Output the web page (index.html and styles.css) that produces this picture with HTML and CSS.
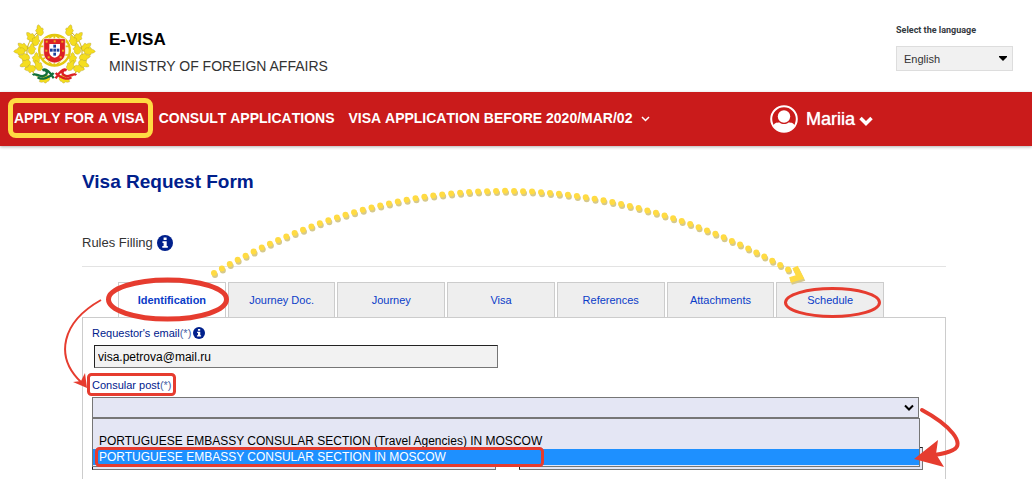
FILE: index.html
```html
<!DOCTYPE html>
<html lang="en">
<head>
    <meta charset="UTF-8">
    <meta name="viewport" content="width=device-width, initial-scale=1.0">
    <title>E-VISA</title>
    <link rel="stylesheet" href="styles.css">
</head>
<body>
    <header class="header">
        <svg class="crest" viewBox="24 24 249 186" aria-hidden="true">
            <defs>
                <path id="leaf" d="M0 0 C-8 -2 -12 -8 -9 -13 C-14 -17 -12 -22 -6 -22 C-6 -28 -3 -32 0 -34 C3 -32 6 -28 6 -22 C12 -22 14 -17 9 -13 C12 -8 8 -2 0 0Z"/>
                <g id="branch">
                    <path d="M122 200 C85 185 62 150 66 105 C68 85 82 62 104 48" fill="none" stroke="#c9ae14" stroke-width="3"/>
                    <g fill="#f5de1e" stroke="#a89226" stroke-width="1">
                        <use href="#leaf" transform="translate(108 62) rotate(-15)"/>
                        <use href="#leaf" transform="translate(88 78) rotate(-42)"/>
                        <use href="#leaf" transform="translate(88 92) rotate(18)"/>
                        <use href="#leaf" transform="translate(66 106) rotate(-52)"/>
                        <use href="#leaf" transform="translate(60 108) rotate(-92)"/>
                        <use href="#leaf" transform="translate(78 118) rotate(8)"/>
                        <use href="#leaf" transform="translate(74 130) rotate(-78)"/>
                        <use href="#leaf" transform="translate(76 140) rotate(-114)"/>
                        <use href="#leaf" transform="translate(94 146) rotate(0)"/>
                        <use href="#leaf" transform="translate(92 160) rotate(-94)"/>
                        <use href="#leaf" transform="translate(108 166) rotate(-30)"/>
                        <use href="#leaf" transform="translate(134 186) rotate(-114)"/>
                    </g>
                </g>
            </defs>
            <use href="#branch"/>
            <use href="#branch" transform="translate(297 0) scale(-1 1)"/>
            <circle cx="148.500" cy="106" r="46" fill="#fffbe0" stroke="#e3c80f" stroke-width="7"/>
            <g fill="none" stroke="#e3c80f" stroke-width="5">
                <ellipse cx="148" cy="106" rx="24" ry="45"/>
                <path d="M104 94 H193 M104 120 H193 M112 134 L185 78 M148 60 V152"/>
            </g>
            <path d="M116 71 H181 V114 C181 132 166 142 149 144 C132 142 116 132 116 114Z" fill="#dc2024" stroke="#fff" stroke-width="2"/>
            <path d="M133 87 H165 V112 C165 121 158 126 149 128 C140 126 133 121 133 112Z" fill="#fff"/>
            <g fill="#1d3f9c">
                <rect x="145" y="89" width="8" height="9"/>
                <rect x="135" y="101" width="8" height="9"/>
                <rect x="145" y="101" width="8" height="9"/>
                <rect x="155" y="101" width="8" height="9"/>
                <rect x="145" y="113" width="8" height="9"/>
            </g>
            <g fill="#f0a81c">
                <rect x="122" y="77" width="6" height="6"/>
                <rect x="146" y="76" width="6" height="6"/>
                <rect x="169" y="77" width="6" height="6"/>
                <rect x="121" y="104" width="6" height="6"/>
                <rect x="171" y="104" width="6" height="6"/>
                <rect x="128" y="124" width="6" height="6"/>
                <rect x="164" y="124" width="6" height="6"/>
            </g>
            <path d="M83 180 C92 172 104 188 118 182 C132 176 124 163 113 166 C122 158 137 172 146 190 M98 187 C110 196 134 188 146 174" fill="none" stroke="#12703b" stroke-width="7"/>
            <path d="M214 180 C205 172 193 188 180 182 C166 176 174 163 184 166 C176 158 162 172 152 190 M199 187 C188 196 164 188 152 174" fill="none" stroke="#dc2024" stroke-width="7"/>
        </svg>
        <div class="brand">
            <div class="brand-name">E-VISA</div>
            <div class="brand-sub">MINISTRY OF FOREIGN AFFAIRS</div>
        </div>
        <div class="language">
            <label for="language">Select the language</label>
            <div class="select-wrap">
                <select id="language" class="language-select">
                    <option>English</option>
                </select>
                <svg class="caret" viewBox="0 0 10 6" aria-hidden="true"><path d="M1 0 H9 V1 L5 5 L1 1Z"/></svg>
            </div>
        </div>
    </header>

    <nav class="nav">
        <a class="active" href="#">APPLY FOR A VISA</a>
        <a href="#">CONSULT APPLICATIONS</a>
        <a href="#">VISA APPLICATION BEFORE 2020/MAR/02
            <svg class="nav-chevron" viewBox="0 0 9 6" aria-hidden="true"><path d="M1 1 L4.500 4.500 L8 1" fill="none" stroke="#fff" stroke-width="1.500"/></svg>
        </a>
        <a class="user" href="#">
            <svg class="avatar" viewBox="0 0 28 28" aria-hidden="true">
                <defs><clipPath id="face"><circle cx="14" cy="14" r="12.500"/></clipPath></defs>
                <circle cx="14" cy="14" r="12.800" fill="none" stroke="#fff" stroke-width="2"/>
                <g clip-path="url(#face)">
                    <path d="M3 28 V22 C4 18 6 17.500 9.500 17.500 C12 19.500 16 19.500 18.500 17.500 C22 17.500 24 18 25 22 V28Z" fill="#fff"/>
                </g>
                <circle cx="14" cy="11.500" r="6.200" fill="#fff"/>
            </svg>
            <span>Mariia</span>
            <svg class="user-chevron" viewBox="0 0 14 10" aria-hidden="true"><path d="M1.500 2 L7 7.500 L12.500 2" fill="none" stroke="#fff" stroke-width="3.500"/></svg>
        </a>
    </nav>

    <main class="container">
        <h1>Visa Request Form</h1>
        <div class="rules">
            <span>Rules Filling</span>
            <svg class="info" viewBox="0 0 16 16" aria-hidden="true"><circle cx="8" cy="8" r="8" fill="#00208c"/><path d="M6.600 2.500 H9.600 V5 H6.600Z M5.500 6.200 H9.700 V11 H10.800 V12.800 H5.300 V11 H6.600 V8 H5.500Z" fill="#fff"/></svg>
        </div>

        <div class="tabs">
            <a class="tab selected" href="#">Identification</a>
            <a class="tab" href="#">Journey Doc.</a>
            <a class="tab" href="#">Journey</a>
            <a class="tab" href="#">Visa</a>
            <a class="tab" href="#">References</a>
            <a class="tab" href="#">Attachments</a>
            <a class="tab" href="#">Schedule</a>
        </div>

        <form class="panel">
            <div class="label-row">
                <label for="email">Requestor's email<span class="req">(*)</span></label>
                <svg class="info small" viewBox="0 0 16 16" aria-hidden="true"><circle cx="8" cy="8" r="8" fill="#00208c"/><path d="M6.600 2.500 H9.600 V5 H6.600Z M5.500 6.200 H9.700 V11 H10.800 V12.800 H5.300 V11 H6.600 V8 H5.500Z" fill="#fff"/></svg>
            </div>
            <input class="field email" id="email" type="text" value="visa.petrova@mail.ru">

            <div class="label-row">
                <label for="post">Consular post<span class="req">(*)</span></label>
            </div>
            <div class="post">
                <select id="post" class="post-select">
                    <option></option>
                </select>
                <svg class="post-chevron" viewBox="0 0 10 7" aria-hidden="true"><path d="M1 1.500 L5 5.500 L9 1.500" fill="none" stroke="#000" stroke-width="2"/></svg>
                <!-- Open list of posts -->
                <ul class="post-list" role="listbox">
                    <li role="option" class="blank"></li>
                    <li role="option">PORTUGUESE EMBASSY CONSULAR SECTION (Travel Agencies) IN MOSCOW</li>
                    <li role="option" class="highlighted" aria-selected="true">PORTUGUESE EMBASSY CONSULAR SECTION IN MOSCOW</li>
                </ul>
            </div>

            <div class="field-row">
                <input class="field name" type="text" aria-label="Surname">
                <input class="field name" type="text" aria-label="Name">
            </div>
        </form>
    </main>

    <!-- Guide marks drawn over the form -->
    <svg class="marks" width="1032" height="479" viewBox="0 0 1032 479" aria-hidden="true">
        <g fill="none" stroke="#e63c2f">
            <ellipse cx="167.500" cy="299.500" rx="59" ry="19.500" stroke-width="5"/>
            <ellipse cx="832.500" cy="302.500" rx="47" ry="14" stroke-width="3"/>
            <path d="M101 300 C62 322 54 356 81 382" stroke-width="2"/>
            <path d="M922 410 C950 425 966 444 953 450 C948 453 941 454 934 455" stroke-width="4" stroke-linecap="round"/>
            <rect x="88.500" y="374.500" width="86" height="20" rx="3" stroke-width="3"/>
            <rect x="96.500" y="448.500" width="446" height="17" rx="3" stroke-width="3"/>
        </g>
        <path d="M87 388 L85 373 L81 381 L73 382Z" fill="#e63c2f"/>
        <path d="M914 459 L938 440 L936 454 L944 467Z" fill="#e63c2f"/>
        <g fill="none" stroke-width="6">
            <g stroke="#d6c98c" transform="translate(1 2)">
                <path d="M214 273 C400 164 604 164 789 270" stroke-dasharray="0 9" stroke-linecap="round"/>
                <path d="M795 267 L800 277 L790 280"/>
            </g>
            <g stroke="#ffdb43">
                <path d="M214 273 C400 164 604 164 789 270" stroke-dasharray="0 9" stroke-linecap="round"/>
                <path d="M795 267 L800 277 L790 280"/>
            </g>
        </g>
    </svg>
</body>
</html>
```

FILE: styles.css
```css
* {
    box-sizing: border-box;
}
body {
    font-family: "Liberation Sans", Arial, sans-serif;
    margin: 0;
    min-height: 100vh;
    display: flex;
    flex-direction: column;
    position: relative;
    background-color: #fff;
    color: #333;
}
a {
    text-decoration: none;
}
.header {
    display: flex;
    align-items: flex-start;
    height: 92px;
    padding: 23px 19px 0 13px;
}
.crest {
    width: 83px;
    height: 62px;
}
.brand {
    margin-left: 13px;
    padding-top: 7px;
}
.brand-name {
    font-size: 17px;
    line-height: 20px;
    font-weight: bold;
    color: #000;
}
.brand-sub {
    margin-top: 6px;
    font-size: 14px;
    line-height: 20px;
}
.language {
    margin-left: auto;
    width: 117px;
}
.language label {
    display: block;
    font-family: Roboto, sans-serif;
    font-size: 9px;
    font-weight: bold;
    line-height: 14px;
    color: #333940;
}
.select-wrap {
    position: relative;
    margin-top: 9px;
}
.language-select {
    appearance: none;
    display: block;
    width: 100%;
    height: 25px;
    padding: 1px 7px 0;
    border: 1px solid #ddd;
    border-radius: 0;
    background-color: #f1f1f1;
    font-family: inherit;
    font-size: 11px;
    color: #333;
}
.caret {
    position: absolute;
    right: 5px;
    top: 10px;
    width: 10px;
    height: 6px;
}
.nav {
    display: flex;
    align-items: center;
    gap: 14px;
    height: 54px;
    padding: 0 159px 2px 14px;
    background-color: #ca1b1b;
    box-shadow: 0 1px 3px rgba(0, 0, 0, 0.3);
}
.nav a {
    color: #fff;
    font-size: 14px;
    font-weight: bold;
    font-kerning: none;
    white-space: nowrap;
    position: relative;
}
.nav .active::after {
    content: "";
    position: absolute;
    inset: -12px -8px -12px -6px;
    border: 5px solid #ffdb43;
    border-radius: 8px;
}
.nav-chevron {
    width: 9px;
    height: 6px;
    margin-left: 5px;
    vertical-align: 1px;
}
.nav .user {
    display: flex;
    align-items: center;
    margin-left: auto;
    padding-top: 2px;
    font-size: 18px;
    font-weight: normal;
    text-shadow: 0 0 1px #fff;
}
.avatar {
    width: 28px;
    height: 28px;
    margin-right: 8px;
}
.user-chevron {
    width: 14px;
    height: 10px;
    margin: 4px 0 0 4px;
}
.container {
    flex: 1;
    display: flex;
    flex-direction: column;
    padding: 24px 86px 0 82px;
}
h1 {
    margin: 0;
    font-size: 19px;
    line-height: 24px;
    color: #00208c;
}
.rules {
    display: flex;
    align-items: center;
    gap: 4px;
    margin-top: 39px;
    padding-bottom: 13px;
    border-bottom: 1px solid #e3e3e3;
    font-size: 13px;
    line-height: 20px;
}
.info {
    width: 16px;
    height: 16px;
}
.info.small {
    width: 12px;
    height: 12px;
}
.tabs {
    display: flex;
    gap: 2px;
    margin-top: 15px;
    padding: 0 62px 0 36px;
}
.tab {
    flex: 1;
    height: 35px;
    border: 1px solid #ccc;
    border-bottom: 0;
    background-color: #eee;
    color: #0a3cc8;
    font-size: 11px;
    line-height: 35px;
    text-align: center;
}
.tab.selected {
    background-color: #fff;
    font-weight: bold;
}
.panel {
    flex: 1;
    padding: 8px 22px 0 9px;
    border: 1px solid #ccc;
    border-bottom: 0;
}
.label-row {
    display: flex;
    align-items: center;
    gap: 2px;
    font-size: 11px;
    line-height: 14px;
    color: #00208c;
}
.req {
    color: #4a5fa5;
}
.field {
    display: block;
    width: 404px;
    height: 23px;
    padding: 0 3px;
    border: 1px solid #767676;
    border-top-color: #222;
    border-left-color: #222;
    border-radius: 0;
    background-color: #f2f2f2;
    font-family: inherit;
    font-size: 12px;
    color: #000;
}
.field.email {
    margin: 5px 0 10px 2px;
}
.post {
    position: relative;
    margin: 5px 4px 0 0;
}
.post-select {
    appearance: none;
    display: block;
    width: 100%;
    height: 21px;
    border: 1px solid #767676;
    border-radius: 0;
    background-color: #e4e6f4;
}
.post-chevron {
    position: absolute;
    right: 5px;
    top: 7px;
    width: 10px;
    height: 7px;
}
.post-list {
    position: absolute;
    top: 21px;
    left: 0;
    right: -1px;
    margin: 0;
    padding: 0 0 1px;
    border: 1px solid #767676;
    background-color: #e4e6f4;
    list-style: none;
    font-size: 12px;
    line-height: 16px;
    color: #000;
}
.post-list li {
    height: 16px;
    padding-left: 6px;
}
.post-list .blank {
    height: 14px;
}
.post-list .highlighted {
    background-color: #1e90ff;
    color: #fff;
}
.field-row {
    display: flex;
    justify-content: space-between;
    margin-top: 29px;
}
.field.name {
    background-color: #e4e6f4;
}
.marks {
    position: absolute;
    top: 0;
    left: 0;
    pointer-events: none;
}
```
